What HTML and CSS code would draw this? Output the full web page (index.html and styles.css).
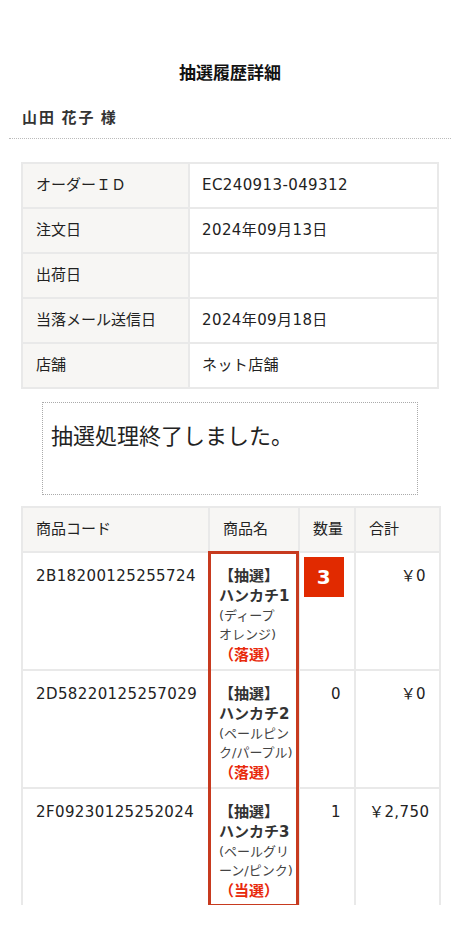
FILE: index.html
```html
<!DOCTYPE html>
<html lang="ja">
<head>
  <meta charset="UTF-8" />
  <meta name="viewport" content="width=device-width, initial-scale=1.0"/>
  <title>抽選履歴詳細</title>
  <link rel="stylesheet" href="styles.css">
</head>
<body>
  <h1 class="page-title">抽選履歴詳細</h1>
  <div class="customer">山田 花子 様</div>

  <table class="info-table">
    <colgroup>
      <col class="info-label-col">
      <col>
    </colgroup>
    <tr><th>オーダーＩＤ</th><td>EC240913-049312</td></tr>
    <tr><th>注文日</th><td>2024年09月13日</td></tr>
    <tr><th>出荷日</th><td></td></tr>
    <tr><th>当落メール送信日</th><td>2024年09月18日</td></tr>
    <tr><th>店舗</th><td>ネット店舗</td></tr>
  </table>

  <div class="message">抽選処理終了しました。</div>

  <div class="items-wrap">
    <table class="items-table">
      <colgroup>
        <col class="c-code">
        <col class="c-name">
        <col class="c-qty">
        <col class="c-total">
      </colgroup>
      <tr>
        <th>商品コード</th>
        <th>商品名</th>
        <th class="qty-head">数量</th>
        <th>合計</th>
      </tr>
      <tr>
        <td>2B18200125255724</td>
        <td class="name">
          <div class="name-main">【抽選】<br>ハンカチ1</div>
          <div class="name-sub">(ディープ<br>オレンジ)</div>
          <div class="result">（落選）</div>
        </td>
        <td class="qty badge-cell"><span class="badge">3</span></td>
        <td class="total">￥0</td>
      </tr>
      <tr>
        <td>2D58220125257029</td>
        <td class="name">
          <div class="name-main">【抽選】<br>ハンカチ2</div>
          <div class="name-sub">(ペールピン<br>ク/パープル)</div>
          <div class="result">（落選）</div>
        </td>
        <td class="qty">0</td>
        <td class="total">￥0</td>
      </tr>
      <tr class="last">
        <td>2F09230125252024</td>
        <td class="name">
          <div class="name-main">【抽選】<br>ハンカチ3</div>
          <div class="name-sub">(ペールグリ<br>ーン/ピンク)</div>
          <div class="result">（当選）</div>
        </td>
        <td class="qty">1</td>
        <td class="total">￥2,750</td>
      </tr>
    </table>
    <div class="name-highlight"></div>
  </div>
</body>
</html>
```

FILE: styles.css
```css
body {
  margin: 0;
  font-family: "Noto Sans CJK JP", "Noto Sans", sans-serif;
  color: #222;
  background: #fff;
}

.page-title {
  margin: 60px 0 0;
  font-size: 17px;
  line-height: 24px;
  text-align: center;
  font-weight: bold;
  color: #111;
}

.customer {
  margin: 22px 9px 0;
  padding: 0 0 10px 13px;
  font-size: 15px;
  line-height: 22px;
  letter-spacing: 2px;
  font-weight: bold;
  color: #333;
  border-bottom: 1px dotted #bbb;
}

table {
  border-collapse: collapse;
  table-layout: fixed;
  width: 418px;
  margin-left: 21px;
}

th, td {
  border: 2px solid #e9e9e9;
  font-family: "DejaVu Sans", "Noto Sans CJK JP", sans-serif;
  font-size: 15px;
  line-height: 21px;
  letter-spacing: 0.4px;
  text-align: left;
  font-weight: normal;
  white-space: nowrap;
}

.info-table {
  margin-top: 23px;
}

.info-label-col {
  width: 167px;
}

.info-table th {
  background: #f7f6f4;
  padding: 11px 13px;
  letter-spacing: 0;
}

.info-table td {
  padding: 11px 12px;
}

.message {
  margin: 13px 42px 0;
  height: 93px;
  box-sizing: border-box;
  border: 1px dotted #aaa;
  padding: 16px 8px 0;
  font-size: 22px;
  line-height: 30px;
  color: #222;
}

.items-wrap {
  position: relative;
  margin-top: 11px;
}

.c-code { width: 187px; }
.c-name { width: 90px; }
.c-qty { width: 56px; }
.c-total { width: 85px; }

.items-table th {
  background: #f7f6f4;
  padding: 11px 6px 11px 13px;
  letter-spacing: 0;
}

.items-table td {
  vertical-align: top;
  padding: 13px 13px 3px;
  line-height: 20px;
}

.items-table td.name {
  padding: 13px 0 3px 9px;
  letter-spacing: 0;
}

.name-main {
  font-weight: bold;
  color: #333;
  line-height: 20px;
}

.name-sub {
  font-size: 13px;
  line-height: 19px;
  color: #444;
}

.result {
  font-weight: bold;
  color: #e8290b;
  line-height: 22px;
}

.items-table td.qty,
.items-table td.total {
  text-align: right;
}

.items-table td.badge-cell {
  padding: 4px 4px;
  text-align: left;
}

.badge {
  display: flex;
  width: 40px;
  height: 40px;
  align-items: center;
  justify-content: center;
  background: #e12a00;
  color: #fff;
  font-weight: bold;
  font-size: 20px;
}

.items-table tr.last td {
  border-bottom: 0;
  padding-bottom: 3px;
}

.name-highlight {
  position: absolute;
  left: 208px;
  top: 45px;
  width: 91px;
  height: 356px;
  box-sizing: border-box;
  border: 3px solid #c73a1f;
}
```
